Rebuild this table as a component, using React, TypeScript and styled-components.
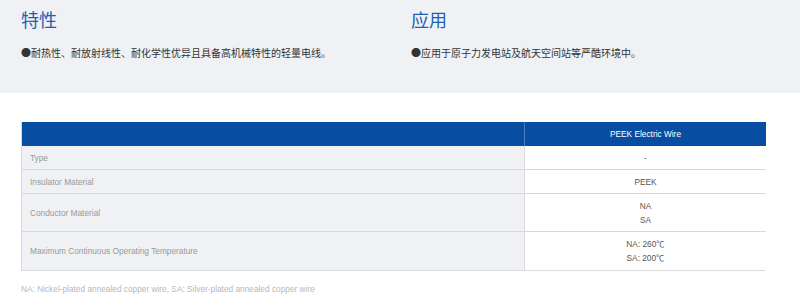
import React from "react";
import styled, { createGlobalStyle } from "styled-components";

const Global = createGlobalStyle`
  html, body { margin: 0; padding: 0; background: #fff; }
  body { font-family: "Liberation Sans", "Noto Sans CJK SC", sans-serif; }
`;

const Page = styled.div`
  width: 800px;
  height: 307px;
  overflow: hidden;
  background: #fff;
`;

const Band = styled.section`
  background: #f0f1f4;
  height: 93px;
  box-sizing: border-box;
  padding: 6px 0 0 21px;
  display: grid;
  grid-template-columns: 390px 1fr;
`;

const Feature = styled.div`
  display: flex;
  flex-direction: column;
`;

const Title = styled.h2`
  margin: 0;
  font-family: "Noto Sans CJK SC", sans-serif;
  font-weight: 400;
  font-size: 18px;
  line-height: 26px;
  color: #1d5fb3;
`;

const Bullet = styled.p`
  margin: 14px 0 0;
  font-family: "Noto Sans CJK SC", sans-serif;
  font-size: 10px;
  line-height: 14px;
  color: #333;
`;

const Table = styled.div`
  margin: 29px 21px 0;
  width: 744px;
  display: grid;
  grid-template-columns: 502px 242px;
  border: 1px solid #dcdcdc;
  border-top: none;
  box-sizing: border-box;
`;

const HeadCell = styled.div<{ $first?: boolean }>`
  background: #074ea2;
  height: 24px;
  display: flex;
  align-items: center;
  justify-content: center;
  color: #fff;
  font-size: 8.3px;
  border-left: ${(p) => (p.$first ? "none" : "1px solid #4a7fc0")};
`;

const LabelCell = styled.div<{ $h: number; $last?: boolean }>`
  background: #f0f1f4;
  height: ${(p) => p.$h}px;
  box-sizing: border-box;
  display: flex;
  align-items: center;
  padding-left: 8px;
  font-size: 8.3px;
  color: #999;
  border-bottom: ${(p) => (p.$last ? "none" : "1px solid #d8d8d8")};
`;

const ValueCell = styled.div<{ $h: number; $last?: boolean }>`
  background: #fff;
  height: ${(p) => p.$h}px;
  box-sizing: border-box;
  display: flex;
  flex-direction: column;
  align-items: center;
  justify-content: center;
  font-size: 8.3px;
  line-height: 14px;
  color: #555;
  border-left: 1px solid #dcdcdc;
  border-bottom: ${(p) => (p.$last ? "none" : "1px solid #d8d8d8")};
`;

const Note = styled.p`
  margin: 13px 0 0 21px;
  font-size: 8.3px;
  color: #b8b8b8;
`;

const rows = [
  { label: "Type", values: ["-"], h: 24 },
  { label: "Insulator Material", values: ["PEEK"], h: 24 },
  { label: "Conductor Material", values: ["NA", "SA"], h: 38 },
  { label: "Maximum Continuous Operating Temperature", values: ["NA: 260℃", "SA: 200℃"], h: 38 },
];

export default function App() {
  return (
    <Page>
      <Global />
      <Band>
        <Feature>
          <Title>特性</Title>
          <Bullet>●耐热性、耐放射线性、耐化学性优异且具备高机械特性的轻量电线。</Bullet>
        </Feature>
        <Feature>
          <Title>应用</Title>
          <Bullet>●应用于原子力发电站及航天空间站等严酷环境中。</Bullet>
        </Feature>
      </Band>
      <Table>
        <HeadCell $first />
        <HeadCell>PEEK Electric Wire</HeadCell>
        {rows.map((r, i) => (
          <React.Fragment key={r.label}>
            <LabelCell $h={r.h} $last={i === rows.length - 1}>{r.label}</LabelCell>
            <ValueCell $h={r.h} $last={i === rows.length - 1}>
              {r.values.map((v) => (
                <span key={v}>{v}</span>
              ))}
            </ValueCell>
          </React.Fragment>
        ))}
      </Table>
      <Note>NA: Nickel-plated annealed copper wire, SA: Silver-plated annealed copper wire</Note>
    </Page>
  );
}
